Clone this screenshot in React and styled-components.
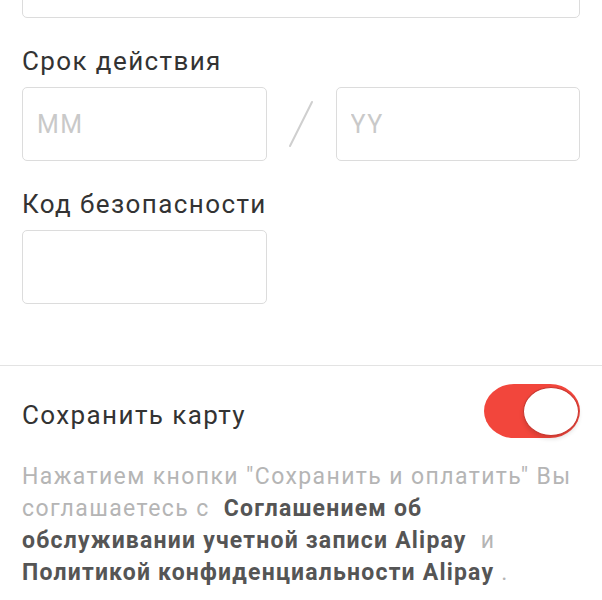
import React from "react";
import styled, { createGlobalStyle } from "styled-components";

const GlobalStyle = createGlobalStyle`
  html, body {
    margin: 0;
    padding: 0;
    background: #fff;
  }
  body {
    font-family: Roboto, "Noto Sans", "Liberation Sans", sans-serif;
    color: #333;
    overflow: hidden;
  }
`;

const Page = styled.div`
  width: 602px;
  margin-top: -56px;
`;

const Form = styled.div`
  padding: 0 22px;
  display: flex;
  flex-direction: column;
`;

const Input = styled.input`
  box-sizing: border-box;
  width: 100%;
  height: 74px;
  border: 1px solid #dcdcdc;
  border-radius: 5px;
  padding: 0 14px;
  font-family: inherit;
  font-size: 25px;
  letter-spacing: 1.5px;
  color: #333;
  background: #fff;
  outline: none;
  &::placeholder {
    color: #c9c9c9;
  }
`;

const Label = styled.div`
  margin-top: 27px;
  margin-bottom: 10px;
  font-size: 26px;
  letter-spacing: 1.4px;
  line-height: 32px;
  color: #333;
`;

const Pair = styled.div`
  display: grid;
  grid-template-columns: 1fr 69px 1fr;
  align-items: center;
`;

const Slash = styled.div`
  display: flex;
  justify-content: center;
  align-items: center;
  height: 74px;
`;

const Divider = styled.hr`
  margin: 61px 0 0;
  border: 0;
  height: 1px;
  background: #e3e3e3;
`;

const Bottom = styled.div`
  padding: 18px 22px 0;
`;

const SwitchRow = styled.div`
  display: flex;
  justify-content: space-between;
  align-items: center;
`;

const SwitchLabel = styled.div`
  font-size: 26px;
  letter-spacing: 1.4px;
  line-height: 32px;
  color: #333;
  padding-top: 7px;
`;

const Track = styled.button`
  box-sizing: border-box;
  width: 96px;
  height: 54px;
  padding: 0 1px 0 0;
  border: 0;
  border-radius: 30px / 27px;
  background: ${(p) => (p.$on ? "#f2463c" : "#e5e5e5")};
  display: flex;
  align-items: center;
  justify-content: ${(p) => (p.$on ? "flex-end" : "flex-start")};
  cursor: pointer;
`;

const Knob = styled.span`
  box-sizing: border-box;
  width: 56px;
  height: 49px;
  border-radius: 50%;
  background: #fff;
  border: 1.5px solid #c9362e;
  box-shadow: 0 3px 4px rgba(0, 0, 0, 0.12);
`;

const Terms = styled.p`
  margin: 23px 0 0;
  font-size: 23px;
  letter-spacing: 1.4px;
  line-height: 32px;
  color: #b5b5b5;
`;

const Link = styled.span`
  color: #555;
  font-weight: 700;
  letter-spacing: 1.2px;
`;

const App = () => {
  const [save, setSave] = React.useState(true);
  return (
    <>
      <GlobalStyle />
      <Page>
        <Form>
          <Input />
          <Label>Срок действия</Label>
          <Pair>
            <Input placeholder="MM" />
            <Slash>
              <svg width="28" height="48" viewBox="0 0 28 48">
                <line
                  x1="25"
                  y1="2"
                  x2="3"
                  y2="46"
                  stroke="#cfcfcf"
                  strokeWidth="2"
                  strokeLinecap="round"
                />
              </svg>
            </Slash>
            <Input placeholder="YY" />
          </Pair>
          <Label>Код безопасности</Label>
          <Pair>
            <Input />
          </Pair>
        </Form>
        <Divider />
        <Bottom>
          <SwitchRow>
            <SwitchLabel>Сохранить карту</SwitchLabel>
            <Track $on={save} onClick={() => setSave(!save)}>
              <Knob />
            </Track>
          </SwitchRow>
          <Terms>
            {'Нажатием кнопки "Сохранить и оплатить" Вы соглашаетесь с\u00a0 '}
            <Link>Соглашением об обслуживании учетной записи Alipay</Link>
            {"\u00a0 и "}
            <Link>Политикой конфиденциальности Alipay</Link>
            {"\u00a0."}
          </Terms>
        </Bottom>
      </Page>
    </>
  );
};

export default App;
